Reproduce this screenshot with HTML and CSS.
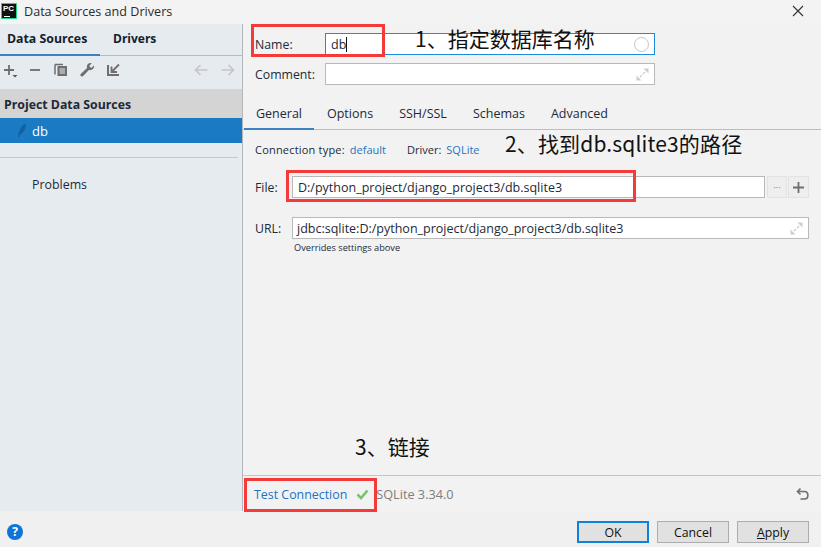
FILE: index.html
```html
<!DOCTYPE html>
<html lang="en">
<head>
<meta charset="utf-8">
<title>Data Sources and Drivers</title>
<link rel="stylesheet" href="styles.css">
</head>
<body>
<div class="window">
  <header class="titlebar">
    <div class="logo"><span class="logo-text">PC</span><span class="logo-bar"></span></div>
    <span class="title">Data Sources and Drivers</span>
    <svg class="close" width="12" height="12" viewBox="0 0 12 12"><path d="M1 1l10 10M11 1L1 11" stroke="#333" stroke-width="1.1" fill="none"/></svg>
  </header>
  <div class="main">
    <aside class="sidebar">
      <nav class="side-tabs">
        <span class="side-tab side-tab-active">Data Sources</span>
        <span class="side-tab">Drivers</span>
      </nav>
      <div class="toolbar">
        <svg class="tool" width="14" height="20" viewBox="0 0 14 20"><path d="M5 5v10M0 10h10" stroke="#6e6e6e" stroke-width="1.800" fill="none"/><path d="M8.500 15h5l-2.500 2.500z" fill="#555"/></svg>
        <svg class="tool" width="12" height="20" viewBox="0 0 12 20"><path d="M0 10h10" stroke="#6e6e6e" stroke-width="1.800" fill="none"/></svg>
        <svg class="tool" width="14" height="20" viewBox="0 0 14 20"><path d="M1 4.500h8M1 4.500v10" stroke="#6e6e6e" stroke-width="1.500" fill="none"/><path d="M3.500 6h9.500v10h-9.500z" fill="#6e6e6e"/><path d="M5.500 9h5.500M5.500 11h5.500M5.500 13h5.500" stroke="#e6ebf0" stroke-width="1"/></svg>
        <svg class="tool" width="15" height="20" viewBox="0 0 15 20"><path d="M14 5.500l-2.800 2.500-2-2 2.500-2.700c-2.300-.8-4.800.8-4.800 3.200 0 .5.100 1 .2 1.400L1 13.800c-.8.800-.8 1.700-.2 2.300s1.500.6 2.300-.2l5.800-5.900c2.800.8 5.800-1.500 5.100-4.500z" fill="#6e6e6e"/></svg>
        <svg class="tool" width="13" height="20" viewBox="0 0 13 20"><path d="M1 5v10h11" stroke="#6e6e6e" stroke-width="2" fill="none"/><path d="M12 4.500L5 11.500M4.500 6.500v5.500h5.500" stroke="#6e6e6e" stroke-width="1.800" fill="none"/></svg>
        <span class="tool-gap"></span>
        <svg class="tool-nav" width="14" height="20" viewBox="0 0 14 20"><path d="M13.500 10H1.500M6.500 5l-5 5 5 5" stroke="#c4c6c8" stroke-width="1.600" fill="none"/></svg>
        <svg class="tool-nav" width="14" height="20" viewBox="0 0 14 20"><path d="M0.500 10h12M7.500 5l5 5-5 5" stroke="#c4c6c8" stroke-width="1.600" fill="none"/></svg>
      </div>
      <div class="group-head">Project Data Sources</div>
      <div class="source-row">
        <svg class="feather" width="10" height="15" viewBox="0 0 10 15"><path d="M1 14.500C1.500 9 3.500 3 8.500 0.500 9.500 5 7 9.500 3 11.500 2.500 12.500 2 13.500 1.800 14.500z" fill="#11609f"/></svg>
        <span>db</span>
      </div>
      <div class="side-sep"></div>
      <div class="problems">Problems</div>
    </aside>
    <section class="content">
      <div class="form-top">
        <div class="field-row">
          <label class="field-label">Name:</label>
          <div class="input input-focus">
            <span class="input-text">db</span><span class="caret"></span>
            <span class="spinner"></span>
          </div>
        </div>
        <div class="field-row field-row-comment">
          <label class="field-label">Comment:</label>
          <div class="input input-comment">
            <svg class="expand" width="13" height="13" viewBox="0 0 13 13"><path d="M7.500 0.500h5v5zM0.500 7.500v5h5z" fill="#c9cdd0"/><path d="M9 4l-2 2M4 9l2-2" stroke="#c9cdd0" stroke-width="1.200"/></svg>
          </div>
        </div>
      </div>
      <nav class="tabs">
        <span class="tab tab-active">General</span>
        <span class="tab">Options</span>
        <span class="tab">SSH/SSL</span>
        <span class="tab">Schemas</span>
        <span class="tab">Advanced</span>
      </nav>
      <div class="general">
        <div class="conn-row">
          <span class="conn-label">Connection type:</span><a class="link link-type">default</a>
          <span>Driver:</span><a class="link">SQLite</a>
        </div>
        <div class="path-row">
          <label class="path-label">File:</label>
          <div class="input input-file"><span>D:/python_project/django_project3/db.sqlite3</span></div>
          <span class="square-btn square-dots">···</span>
          <span class="square-btn square-plus"><svg width="11" height="11" viewBox="0 0 11 11"><path d="M5.500 0v11M0 5.500h11" stroke="#6e6e6e" stroke-width="1.800"/></svg></span>
        </div>
        <div class="path-row path-row-url">
          <label class="path-label">URL:</label>
          <div class="input input-url">
            <span>jdbc:sqlite:D:/python_project/django_project3/db.sqlite3</span>
            <svg class="expand" width="13" height="13" viewBox="0 0 13 13"><path d="M7.500 0.500h5v5zM0.500 7.500v5h5z" fill="#c9cdd0"/><path d="M9 4l-2 2M4 9l2-2" stroke="#c9cdd0" stroke-width="1.200"/></svg>
          </div>
        </div>
        <div class="hint">Overrides settings above</div>
      </div>
      <div class="status-bar">
        <a class="link link-test">Test Connection</a>
        <svg class="check" width="13" height="11" viewBox="0 0 13 11"><path d="M1.500 5.500l3.500 3.500 6.500-7.500" stroke="#7cbf6f" stroke-width="2.600" fill="none"/></svg>
        <span class="version">SQLite 3.34.0</span>
        <svg class="revert" width="13" height="14" viewBox="0 0 13 14"><path d="M4.500 1.500L1.500 4.500l3 3" stroke="#6e6e6e" stroke-width="1.600" fill="none"/><path d="M2 4.500h6.500c4.500 0 4.500 7.500 0 7.500H4.500" stroke="#6e6e6e" stroke-width="1.600" fill="none"/></svg>
      </div>
    </section>
  </div>
  <footer class="footer">
    <span class="help">?</span>
    <button class="btn btn-primary">OK</button>
    <button class="btn">Cancel</button>
    <button class="btn"><u>A</u>pply</button>
  </footer>
</div>
<div class="mark mark-name"></div>
<div class="mark mark-file"></div>
<div class="mark mark-test"></div>
<div class="note note-1">1、指定数据库名称</div>
<div class="note note-2">2、找到db.sqlite3的路径</div>
<div class="note note-3">3、链接</div>
</body>
</html>
```

FILE: styles.css
```css
* { box-sizing: border-box; }
html, body { margin: 0; padding: 0; }
body {
  width: 821px;
  height: 547px;
  overflow: hidden;
  position: relative;
  font-family: "Open Sans", "Noto Sans", sans-serif;
  font-size: 12.300px;
  color: #1c2a38;
  background: #f2f2f2;
}
.window { display: flex; flex-direction: column; height: 547px; }

.titlebar {
  height: 24px;
  flex: none;
  display: flex;
  align-items: center;
  padding: 0 17px 3px 1px;
  background: #f3f3f3;
}
.logo {
  width: 16px;
  height: 16px;
  background: #111;
  border: 1px solid #21d789;
  position: relative;
  color: #fff;
  flex: none;
}
.logo-text { display: block; font: bold 8px/8px "Liberation Sans", sans-serif; padding: 1px 0 0 1px; }
.logo-bar { position: absolute; left: 2px; bottom: 1px; width: 6px; height: 1px; background: #fff; }
.title { margin: 2px 0 0 7px; font-size: 12.600px; color: #2b2b2b; }
.close { margin-left: auto; }

.main { flex: 1; display: flex; min-height: 0; }

.sidebar {
  width: 243px;
  flex: none;
  background: #e6ebf0;
  border-right: 1px solid #b4b7ba;
  display: flex;
  flex-direction: column;
}
.side-tabs { height: 32px; flex: none; display: flex; border-bottom: 1px solid #b9bcbf; }
.side-tab { width: 100px; padding: 6px 0 0 7px; font-weight: 700; color: #14202c; }
.side-tab-active { border-bottom: 2px solid #3c80c5; height: 32px; }
.side-tab + .side-tab { width: auto; padding-left: 13px; font-size: 12px; }
.toolbar { height: 33px; flex: none; display: flex; align-items: center; padding: 0 7px 5px 4px; }
.tool { margin-right: 12px; flex: none; }
.tool-gap { flex: 1; }
.tool-nav { margin-left: 13px; flex: none; }
.group-head {
  height: 29px;
  flex: none;
  background: #d4d4d4;
  padding: 7px 0 0 4px;
  font-weight: 700;
}
.source-row {
  height: 25px;
  flex: none;
  background: #1b7ac4;
  color: #fff;
  display: flex;
  align-items: center;
  font-size: 13px;
  padding-left: 17px;
}
.feather { margin-right: 5px; }
.side-sep { height: 1px; flex: none; margin: 14px 4px 0 0; background: #c6c9cc; }
.problems { margin: 18px 0 0 32px; font-size: 12.400px; }

.content { flex: 1; min-width: 0; display: flex; flex-direction: column; }
.form-top { padding: 9px 166px 0 12px; height: 76px; flex: none; }
.field-row { display: flex; align-items: center; height: 22px; }
.field-row-comment { margin-top: 8px; }
.field-label { width: 70px; flex: none; }
.input {
  background: #fff;
  border: 1px solid #b9b9b9;
  height: 22px;
  display: flex;
  align-items: center;
  padding-left: 5px;
  position: relative;
  flex: 1;
  white-space: nowrap;
  font-size: 12.500px;
}
.input-focus { border-color: #1b8bdd; }
.caret { width: 1px; height: 15px; background: #111; }
.spinner {
  position: absolute;
  right: 5px;
  top: 3px;
  width: 15px;
  height: 15px;
  border: 1px solid #c2c6c9;
  border-radius: 50%;
}
.expand { position: absolute; right: 5px; top: 4px; }

.tabs {
  height: 30px;
  flex: none;
  display: flex;
  border-bottom: 1px solid #bdbdbd;
  padding-left: 1px;
  font-size: 12.500px;
}
.tab { padding: 5px 13px 0 12px; margin-right: 1px; height: 30px; }
.tab-active { width: 70px; padding-right: 0; border-bottom: 2px solid #3c80c5; }

.general { flex: 1; padding: 0 12px; }
.conn-row { display: flex; height: 46px; padding-top: 12px; font-size: 11px; gap: 5px; }
.conn-label { letter-spacing: 0.200px; }
.link { color: #1f74c0; }
.link-type { margin-right: 16px; }
.path-row { display: flex; align-items: center; height: 22px; }
.path-row-url { margin-top: 19px; }
.path-label { width: 37px; flex: none; }
.input-file { flex: none; width: 473px; }
.input-url { flex: none; width: 517px; padding-left: 4px; }
.square-btn {
  width: 20px;
  height: 22px;
  flex: none;
  margin-left: 2px;
  background: #eeeeee;
  border: 1px solid #e2e2e2;
  display: flex;
  align-items: center;
  justify-content: center;
}
.square-plus { width: 21px; margin-left: 1px; }
.square-dots { font-size: 9px; color: #777; }
.hint { margin: 2px 0 0 39px; font-size: 9.200px; line-height: 13px; }

.status-bar {
  height: 36px;
  flex: none;
  border-top: 1px solid #c4c4c4;
  display: flex;
  align-items: center;
  padding: 1px 12px 0 11px;
}
.link-test { color: #1a73c4; font-size: 12.400px; }
.check { margin: 0 7px 0 9px; flex: none; }
.version { color: #7d7d7d; font-size: 12.700px; }
.revert { margin-left: auto; }

.footer {
  height: 36px;
  flex: none;
  background: #f0f0f0;
  display: flex;
  align-items: center;
  padding: 6px 12px 0 7px;
  gap: 8px;
}
.help {
  width: 16px;
  height: 16px;
  border-radius: 50%;
  background: #0f74d6;
  color: #fff;
  font-weight: 700;
  font-size: 12px;
  line-height: 16px;
  text-align: center;
  margin-right: auto;
}
.btn {
  width: 72px;
  height: 22px;
  background: #e1e1e1;
  border: 1px solid #adadad;
  padding: 0;
  font-family: "Open Sans", "Noto Sans", sans-serif;
  font-size: 12.300px;
  color: #111;
}
.btn-primary { border: 2px solid #0f82d8; }

.mark { position: absolute; border: 3px solid #f53a3a; }
.mark-name { left: 251px; top: 24px; width: 134px; height: 33px; }
.mark-file { left: 286px; top: 170px; width: 350px; height: 32px; }
.mark-test { left: 244px; top: 478px; width: 133px; height: 34px; }
.note {
  position: absolute;
  font-family: "Noto Sans CJK SC", "Noto Sans", sans-serif;
  font-size: 21px;
  line-height: 28px;
  color: #111;
  white-space: nowrap;
}
.note-1 { left: 415px; top: 24px; }
.note-2 { left: 505px; top: 129px; letter-spacing: 0.150px; }
.note-3 { left: 355px; top: 432px; }
```
